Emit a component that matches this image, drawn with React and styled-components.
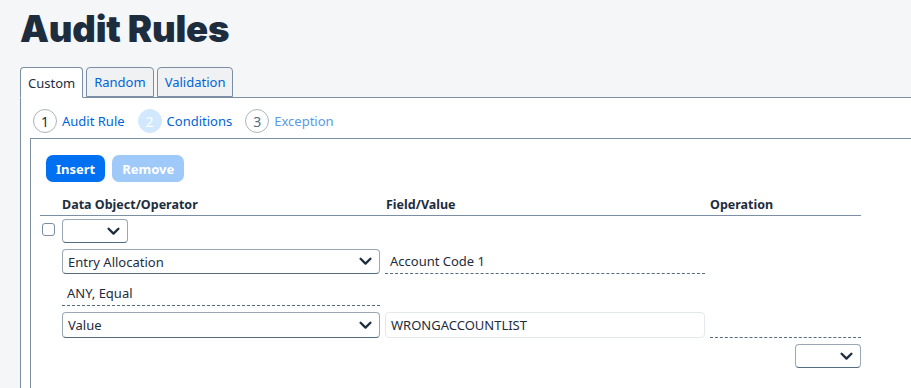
import styled, { createGlobalStyle } from "styled-components";

const GlobalStyle = createGlobalStyle`
  body {
    margin: 0;
    background: #f5f6f7;
    font-family: "Noto Sans", "Liberation Sans", sans-serif;
    color: #1d2d3e;
  }
`;

const Page = styled.div`
  padding: 4px 0 0 20px;
  height: 384px;
  overflow: hidden;
`;

const Title = styled.h1`
  margin: 0;
  height: 63px;
  font-family: Inter, "Noto Sans", sans-serif;
  font-weight: 900;
  font-size: 36.5px;
  line-height: 50px;
  color: #1d2d3e;
  letter-spacing: -0.2px;
`;

const Tabs = styled.div`
  display: flex;
  gap: 3px;
  position: relative;
  z-index: 1;
  margin-bottom: -1px;
`;

const Tab = styled.div`
  box-sizing: border-box;
  padding: 0 7px;
  display: flex;
  align-items: center;
  font-size: 13px;
  border: 1px solid #7b8ea3;
  border-radius: 4px 4px 0 0;
  background: ${(p) => (p.$active ? "#fff" : "#eff1f3")};
  color: ${(p) => (p.$active ? "#1d2d3e" : "#0064d9")};
  border-bottom-color: ${(p) => (p.$active ? "#fff" : "#7b8ea3")};
  height: ${(p) => (p.$active ? "31px" : "30px")};
`;

const Panel = styled.div`
  background: #fff;
  border-top: 1px solid #7b8ea3;
  border-left: 1px solid #7b8ea3;
  padding: 11px 0 0 12px;
  height: 300px;
`;

const Steps = styled.div`
  display: flex;
  align-items: center;
  gap: 13px;
  height: 24px;
  margin-bottom: 5px;
`;

const Step = styled.div`
  display: flex;
  align-items: center;
  gap: 5px;
  font-size: 13px;
  color: ${(p) => (p.$muted ? "#5a9ae6" : "#0064d9")};
`;

const StepCircle = styled.span`
  width: 24px;
  height: 24px;
  box-sizing: border-box;
  border-radius: 50%;
  display: flex;
  align-items: center;
  justify-content: center;
  font-size: 14px;
  border: 1px solid ${(p) => (p.$current ? "#d1e8ff" : "#a9b4be")};
  background: ${(p) => (p.$current ? "#d1e8ff" : "#fff")};
  color: ${(p) => (p.$current ? "#fff" : p.$muted ? "#556b82" : "#1d2d3e")};
`;

const Box = styled.div`
  border-top: 1px solid #7b8ea3;
  border-left: 1px solid #7b8ea3;
  margin-left: -3px;
  padding: 16px 0 0 15px;
  height: 260px;
`;

const Toolbar = styled.div`
  display: flex;
  gap: 7px;
  margin-bottom: 11px;
`;

const Button = styled.button`
  height: 27px;
  border: none;
  border-radius: 7px;
  padding: 0 10px;
  font-family: inherit;
  font-size: 13px;
  font-weight: 700;
  color: #fff;
  background: ${(p) => (p.disabled ? "#9ec9f8" : "#0070f2")};
`;

const Grid = styled.div`
  display: grid;
  grid-template-columns: 17px 318px 320px 151px;
  column-gap: 5px;
  row-gap: 6px;
  grid-template-rows: 20px 24px 25px 26px 26px 24px;
  margin-left: -6px;
  width: 821px;
`;

const HeadCell = styled.div`
  grid-column: ${(p) => p.$col};
  grid-row: 1;
  font-size: 12.5px;
  font-weight: 700;
  padding: 2px 0 0 ${(p) => p.$pad || 0}px;
  line-height: 20px;
`;

const HeadLine = styled.div`
  grid-column: 1 / -1;
  grid-row: 1;
  align-self: end;
  border-bottom: 1px solid #7b8ea3;
  margin-bottom: -3px;
`;

const Cell = styled.div`
  grid-column: ${(p) => p.$col};
  grid-row: ${(p) => p.$row};
  display: flex;
  justify-content: ${(p) => p.$justify || "flex-start"};
`;

const Check = styled.span`
  width: 13px;
  height: 13px;
  margin: 4px 0 0 2px;
  box-sizing: border-box;
  border: 1px solid #7b8ea3;
  border-radius: 3px;
  background: #fff;
`;

const Select = styled.div`
  width: ${(p) => p.$w || "100%"};
  box-sizing: border-box;
  border: 1px solid #9aa8b6;
  border-bottom-color: #556b82;
  border-radius: 4px;
  background: #fff;
  display: flex;
  align-items: center;
  justify-content: space-between;
  padding: 0 7px 0 5px;
  font-size: 13px;
`;

const Chevron = () => (
  <svg width="13" height="9" viewBox="0 0 13 9">
    <path d="M1.6 1.8 L6.5 6.6 L11.4 1.8" fill="none" stroke="#1d2d3e" strokeWidth="2.3" strokeLinecap="round" strokeLinejoin="round" />
  </svg>
);

const TextField = styled.div`
  width: 100%;
  box-sizing: border-box;
  display: flex;
  align-items: center;
  padding: 0 5px;
  font-size: 13px;
  border-bottom: 1px dashed #556b82;
`;

const Input = styled.div`
  width: 100%;
  box-sizing: border-box;
  display: flex;
  align-items: center;
  padding: 0 5px;
  font-size: 13px;
  border: 1px solid #e5e8eb;
  border-radius: 4px;
`;

export default function App() {
  return (
    <>
      <GlobalStyle />
      <Page>
        <Title>Audit Rules</Title>
        <Tabs>
          <Tab $active>Custom</Tab>
          <Tab>Random</Tab>
          <Tab>Validation</Tab>
        </Tabs>
        <Panel>
          <Steps>
            <Step>
              <StepCircle>1</StepCircle>Audit Rule
            </Step>
            <Step>
              <StepCircle $current>2</StepCircle>Conditions
            </Step>
            <Step $muted>
              <StepCircle $muted>3</StepCircle>Exception
            </Step>
          </Steps>
          <Box>
            <Toolbar>
              <Button>Insert</Button>
              <Button disabled>Remove</Button>
            </Toolbar>
            <Grid>
              <HeadCell $col={2}>Data Object/Operator</HeadCell>
              <HeadCell $col={3} $pad={1}>Field/Value</HeadCell>
              <HeadCell $col={4}>Operation</HeadCell>
              <HeadLine />

              <Cell $col={1} $row={2}>
                <Check />
              </Cell>
              <Cell $col={2} $row={2}>
                <Select $w="66px">
                  <span />
                  <Chevron />
                </Select>
              </Cell>

              <Cell $col={2} $row={3}>
                <Select>
                  Entry Allocation
                  <Chevron />
                </Select>
              </Cell>
              <Cell $col={3} $row={3}>
                <TextField>Account Code 1</TextField>
              </Cell>

              <Cell $col={2} $row={4}>
                <TextField>ANY, Equal</TextField>
              </Cell>

              <Cell $col={2} $row={5}>
                <Select>
                  Value
                  <Chevron />
                </Select>
              </Cell>
              <Cell $col={3} $row={5}>
                <Input>WRONGACCOUNTLIST</Input>
              </Cell>
              <Cell $col={4} $row={5}>
                <TextField />
              </Cell>

              <Cell $col={4} $row={6} $justify="flex-end">
                <Select $w="66px">
                  <span />
                  <Chevron />
                </Select>
              </Cell>
            </Grid>
          </Box>
        </Panel>
      </Page>
    </>
  );
}
